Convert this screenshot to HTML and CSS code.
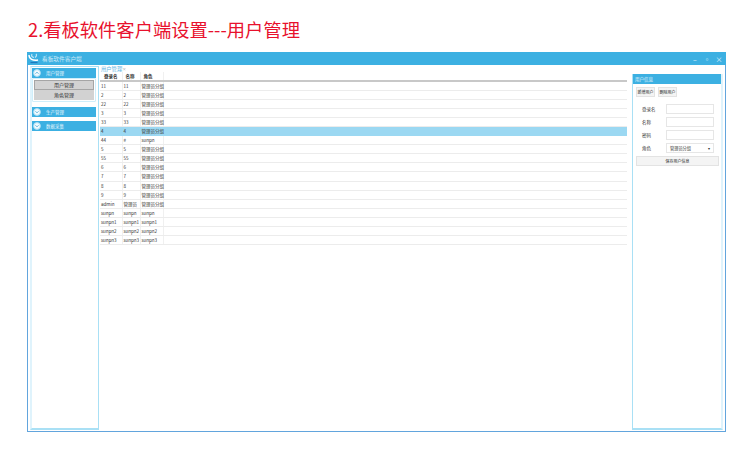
FILE: index.html
```html
<!DOCTYPE html>
<html lang="zh-CN">
<head>
  <meta charset="UTF-8">
  <title>看板软件客户端设置</title>
  <link rel="stylesheet" href="styles.css">
</head>
<body>
  <h1 class="pageTitle">2.看板软件客户端设置---用户管理</h1>

  <div class="window">
    <div class="titleBar">
      <svg class="logo" width="11" height="11" viewBox="0 0 11 11">
        <path d="M1 2c0 4 4 6 9 5" fill="none" stroke="#fff" stroke-width="1.4"/>
        <path d="M4 1c-1 2 0 3 2 3.500M8 1c1 1 .5 2.500-1 3.500" fill="none" stroke="#bfe6f7" stroke-width="1.200"/>
        <path d="M2.500 9.500h7" stroke="#1c78bd" stroke-width="1.300"/>
      </svg>
      <span class="appName">看板软件客户端</span>
      <div class="winBtns">
        <span class="winBtn">–</span>
        <span class="winBtn">▫</span>
        <span class="winBtn">×</span>
      </div>
    </div>

    <div class="content">
      <!-- left menu -->
      <div class="menu">
        <div class="menuHead">
          <svg class="circle" width="8" height="8" viewBox="0 0 8 8">
            <circle cx="4" cy="4" r="3.400" fill="#f2fafd" stroke="#a9dcf3"/>
            <path d="M2.500 4.700 4 3.200l1.500 1.500" fill="none" stroke="#2f9fd6" stroke-width=".8"/>
          </svg>
          用户管理
        </div>
        <div class="subMenu">
          <div class="subItem active">用户管理</div>
          <div class="subItem">角色管理</div>
        </div>
        <div class="menuHead">
          <svg class="circle" width="8" height="8" viewBox="0 0 8 8">
            <circle cx="4" cy="4" r="3.400" fill="#f2fafd" stroke="#a9dcf3"/>
            <path d="M2.500 3.300 4 4.800l1.500-1.500" fill="none" stroke="#2f9fd6" stroke-width=".8"/>
          </svg>
          生产管理
        </div>
        <div class="menuHead">
          <svg class="circle" width="8" height="8" viewBox="0 0 8 8">
            <circle cx="4" cy="4" r="3.400" fill="#f2fafd" stroke="#a9dcf3"/>
            <path d="M2.500 3.300 4 4.800l1.500-1.500" fill="none" stroke="#2f9fd6" stroke-width=".8"/>
          </svg>
          数据采集
        </div>
      </div>

      <!-- user table -->
      <div class="main">
        <div class="tab">用户管理<span class="tabX">×</span></div>
        <table class="userTable">
          <thead>
            <tr><th>登录名</th><th>名称</th><th>角色</th><th class="rest"></th></tr>
          </thead>
          <tbody>
            <tr><td>11</td><td>11</td><td>管理员分组</td><td></td></tr>
            <tr><td>2</td><td>2</td><td>管理员分组</td><td></td></tr>
            <tr><td>22</td><td>22</td><td>管理员分组</td><td></td></tr>
            <tr><td>3</td><td>3</td><td>管理员分组</td><td></td></tr>
            <tr><td>33</td><td>33</td><td>管理员分组</td><td></td></tr>
            <tr class="selected"><td>4</td><td>4</td><td>管理员分组</td><td></td></tr>
            <tr><td>44</td><td>#</td><td>sunpn</td><td></td></tr>
            <tr><td>5</td><td>5</td><td>管理员分组</td><td></td></tr>
            <tr><td>55</td><td>55</td><td>管理员分组</td><td></td></tr>
            <tr><td>6</td><td>6</td><td>管理员分组</td><td></td></tr>
            <tr><td>7</td><td>7</td><td>管理员分组</td><td></td></tr>
            <tr><td>8</td><td>8</td><td>管理员分组</td><td></td></tr>
            <tr><td>9</td><td>9</td><td>管理员分组</td><td></td></tr>
            <tr><td>admin</td><td>管理员</td><td>管理员分组</td><td></td></tr>
            <tr><td>sunpn</td><td>sunpn</td><td>sunpn</td><td></td></tr>
            <tr><td>sunpn1</td><td>sunpn1</td><td>sunpn1</td><td></td></tr>
            <tr><td>sunpn2</td><td>sunpn2</td><td>sunpn2</td><td></td></tr>
            <tr><td>sunpn3</td><td>sunpn3</td><td>sunpn3</td><td></td></tr>
          </tbody>
        </table>
      </div>

      <!-- right panel -->
      <div class="side">
        <div class="sideHead">用户信息</div>
        <div class="sideBtns">
          <button class="smallBtn">新增用户</button>
          <button class="smallBtn">删除用户</button>
        </div>
        <div class="field"><label>登录名</label><span class="input"></span></div>
        <div class="field"><label>名称</label><span class="input"></span></div>
        <div class="field"><label>密码</label><span class="input"></span></div>
        <div class="field">
          <label>角色</label>
          <span class="input select">管理员分组<i class="arrow">▾</i></span>
        </div>
        <button class="saveBtn">保存用户信息</button>
      </div>
    </div>
  </div>
</body>
</html>
```

FILE: styles.css
```css
html, body {
  margin: 0;
  height: 100%;
  background-color: #fff;
  overflow: hidden;
}
body {
  font-family: "Noto Sans CJK SC", "Liberation Sans", sans-serif;
  font-size: 4.5px;
  color: #333;
}
.pageTitle {
  margin: 0;
  padding: 16px 0 0 28px;
  height: 36px;
  box-sizing: border-box;
  font-size: 18.3px;
  line-height: 26px;
  font-weight: 400;
  color: #e8112d;
  white-space: nowrap;
}
.window {
  width: 699px;
  height: 380px;
  margin: 16px 0 0 27px;
  box-sizing: border-box;
  border: 1px solid #62a5dd;
  border-top: none;
  display: flex;
  flex-direction: column;
}
.titleBar {
  height: 13px;
  margin: 0 -1px;
  flex: none;
  display: flex;
  align-items: center;
  background-color: #3cb0e2;
  color: #cfeaf7;
}
.logo {
  margin-left: 1px;
}
.appName {
  margin-left: 3px;
  font-size: 5.7px;
}
.winBtns {
  margin-left: auto;
  display: flex;
  gap: 4px;
  padding-right: 3px;
}
.winBtn {
  width: 8px;
  text-align: center;
  font-size: 7px;
  line-height: 8px;
  color: #e6f5fc;
}
.content {
  flex: 1;
  display: flex;
  min-height: 0;
  padding: 1px 2px 1px 2px;
}
.menu {
  width: 69px;
  flex: none;
  box-sizing: border-box;
  border: 1px solid #a9e0f5;
  border-left: 2px solid #dff3fc;
  border-bottom: 2px solid #a9e0f5;
  padding: 1px 2px 0 0;
}
.menuHead {
  height: 10px;
  margin-bottom: 4px;
  display: flex;
  align-items: center;
  background-color: #3cb0e2;
  color: #e6f5fc;
}
.circle {
  flex: none;
  margin: 0 5px 0 1px;
}
.subMenu {
  margin: -4px 0 5px 0;
  padding: 1px;
  border: 1px solid #cfeefa;
  border-radius: 1px;
}
.subItem {
  height: 10px;
  line-height: 10px;
  text-align: center;
  background-color: #d2d2d2;
  font-size: 5px;
}
.subItem.active {
  box-sizing: border-box;
  line-height: 8px;
  border: 1px solid #a5a5a5;
}
.main {
  flex: 1;
  min-width: 0;
  padding-left: 1px;
  padding-right: 5px;
}
.tab {
  height: 6px;
  line-height: 6px;
  padding-left: 1px;
  color: #5eb4e2;
  font-size: 5.3px;
}
.tabX {
  font-size: 4px;
  vertical-align: top;
  color: #999;
}
.userTable {
  width: 100%;
  border-collapse: collapse;
  table-layout: fixed;
}
.userTable th, .userTable td {
  height: 9.06px;
  padding: 0 0 0 1px;
  box-sizing: border-box;
  line-height: 8px;
  text-align: left;
  white-space: nowrap;
  border-right: 1px solid #f0f0f0;
  border-bottom: 1px solid #ececec;
  font-weight: 400;
}
.userTable th {
  padding-left: 3px;
  font-weight: 700;
  border-bottom: 2px solid #c8c8c8;
}
.userTable th:first-child {
  padding-left: 4px;
}
.userTable th:nth-child(1), .userTable td:nth-child(1) { width: 22px; }
.userTable th:nth-child(2), .userTable td:nth-child(2) { width: 18px; }
.userTable th:nth-child(3), .userTable td:nth-child(3) { width: 23px; }
.userTable .rest, .userTable td:last-child {
  border-right: none;
}
.userTable tr.selected td {
  background-color: #9bd8f2;
  border-color: #9bd8f2;
}
.side {
  width: 91px;
  flex: none;
  box-sizing: border-box;
  border: 1px solid #a9e0f5;
  border-top: none;
  border-right: 2px solid #dff3fc;
  border-bottom: 2px solid #a9e0f5;
  margin-top: 8px;
}
.sideHead {
  height: 10px;
  line-height: 10px;
  padding-left: 2px;
  background-color: #3cb0e2;
  color: #e6f5fc;
}
.sideBtns {
  display: flex;
  gap: 3px;
  padding: 3px 3px 7px 3px;
}
.smallBtn {
  height: 10px;
  width: 19px;
  padding: 0;
  border: 1px solid #e3e3e3;
  background-color: #f4f4f4;
  font: inherit;
  font-size: 4px;
  line-height: 8px;
  white-space: nowrap;
  color: #222;
}
.field {
  display: flex;
  align-items: center;
  height: 10px;
  margin-bottom: 3px;
}
.field label {
  width: 33px;
  padding-left: 9px;
  box-sizing: border-box;
  flex: none;
}
.input {
  width: 48px;
  height: 10px;
  box-sizing: border-box;
  border: 1px solid #e6e6e6;
  background-color: #fff;
}
.select {
  display: flex;
  justify-content: space-between;
  align-items: center;
  padding: 0 3px;
  font-size: 4.2px;
}
.arrow {
  font-style: normal;
  font-size: 4px;
}
.saveBtn {
  display: block;
  width: 83px;
  height: 10px;
  margin-left: 3px;
  padding: 0;
  border: 1px solid #e3e3e3;
  background-color: #f4f4f4;
  font: inherit;
  font-size: 4px;
  color: #222;
}
```
